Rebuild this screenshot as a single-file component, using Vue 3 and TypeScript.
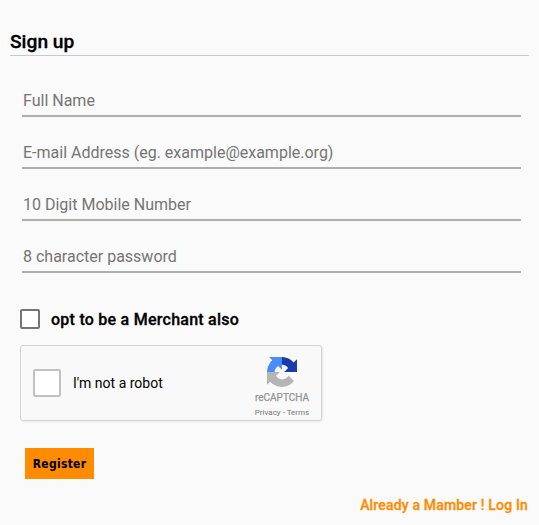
<script setup lang="ts">
import { reactive, ref } from 'vue'

interface Field {
  key: 'name' | 'email' | 'mobile' | 'password'
  type: string
  placeholder: string
}

const fields: Field[] = [
  { key: 'name', type: 'text', placeholder: 'Full Name' },
  { key: 'email', type: 'email', placeholder: 'E-mail Address (eg. example@example.org)' },
  { key: 'mobile', type: 'tel', placeholder: '10 Digit Mobile Number' },
  { key: 'password', type: 'password', placeholder: '8 character password' },
]
const form = reactive({ name: '', email: '', mobile: '', password: '' })
const merchant = ref(false)
const human = ref(false)
</script>

<template>
  <main class="signup">
    <h1 class="title">Sign up</h1>
    <form @submit.prevent>
      <div class="fields">
        <input
          v-for="f in fields"
          :key="f.key"
          v-model="form[f.key]"
          class="field"
          :type="f.type"
          :placeholder="f.placeholder"
        />
      </div>
      <label class="merchant">
        <input v-model="merchant" class="box" type="checkbox" />
        <span class="merchant-text">opt to be a Merchant also</span>
      </label>
      <div class="captcha">
        <label class="robot">
          <input v-model="human" class="box robot-box" type="checkbox" />
          <span class="robot-text">I'm not a robot</span>
        </label>
        <div class="brand">
          <svg class="logo" viewBox="0 0 64 64" aria-hidden="true">
            <path fill="#1c3aa9" d="M64 31.955l-.033-1.37V4.687l-7.16 7.16C50.948 4.674 42.033.093 32.05.093c-10.4 0-19.622 4.96-25.458 12.64l11.736 11.86a15.55 15.55 0 0 1 4.754-5.334c2.05-1.6 4.952-2.906 8.968-2.906.485 0 .86.057 1.135.163 4.976.393 9.288 3.14 11.828 7.124l-8.307 8.307L64 31.953" />
            <path fill="#4a8df6" d="M31.862.094l-1.37.033H4.594l7.16 7.16C4.58 13.147 0 22.06 0 32.046c0 10.4 4.96 19.622 12.64 25.458L24.5 45.768a15.55 15.55 0 0 1-5.334-4.754c-1.6-2.05-2.906-4.952-2.906-8.968 0-.485.057-.86.163-1.135.393-4.976 3.14-9.288 7.124-11.828l8.307 8.307L31.86.095" />
            <path fill="#b5b5b5" d="M.001 32.045l.033 1.37v25.898l7.16-7.16c5.86 7.173 14.774 11.754 24.76 11.754 10.4 0 19.622-4.96 25.458-12.64l-11.736-11.86a15.55 15.55 0 0 1-4.754 5.334c-2.05 1.6-4.952 2.906-8.968 2.906-.485 0-.86-.057-1.135-.163-4.976-.393-9.288-3.14-11.828-7.124l8.307-8.307-27.3.001" />
          </svg>
          <span class="brand-name">reCAPTCHA</span>
          <span class="legal">Privacy - Terms</span>
        </div>
      </div>
      <button class="register" type="submit">Register</button>
    </form>
    <a class="login">Already a Mamber ! Log In</a>
  </main>
</template>

<style>
body {
  background: #fafafa;
}
</style>

<style scoped>
.signup {
  box-sizing: border-box;
  display: flex;
  flex-direction: column;
  height: 525px;
  padding: 28px 10px 0;
  font-family: Roboto, 'Liberation Sans', sans-serif;
  color: #000;
}
.title {
  margin: 0;
  height: 27px;
  border-bottom: 1px solid #c8c8c8;
  font-size: 19.2px;
  line-height: 27px;
  font-weight: 500;
  -webkit-text-stroke: 0.3px #000;
}
.fields {
  display: flex;
  flex-direction: column;
  gap: 20px;
  padding: 29px 8px 0 12px;
}
.field {
  box-sizing: border-box;
  height: 32px;
  width: 100%;
  padding: 0 1px;
  border: 0;
  border-bottom: 2px solid #aeaeae;
  border-radius: 0;
  outline: 0;
  background: transparent;
  font: 16px/30px Roboto, 'Liberation Sans', sans-serif;
}
.field::placeholder {
  color: #757575;
  opacity: 1;
}
.merchant {
  display: flex;
  align-items: center;
  gap: 11px;
  width: max-content;
  height: 20px;
  margin: 36px 0 0 10px;
  font-size: 16px;
  font-weight: 500;
  letter-spacing: 0.25px;
}
.merchant-text {
  -webkit-text-stroke: 0.3px #000;
}
.box {
  appearance: none;
  box-sizing: border-box;
  width: 20px;
  height: 20px;
  margin: 0;
  border: 2px solid #757575;
  border-radius: 2px;
  background: #fff;
}
.captcha {
  box-sizing: border-box;
  display: flex;
  justify-content: space-between;
  width: 302px;
  height: 76px;
  margin: 16px 0 0 10px;
  padding: 0 11px 0 12px;
  border: 1px solid #d3d3d3;
  border-radius: 3px;
  background: #f9f9f9;
  box-shadow: 1px 1px 2px rgba(0, 0, 0, 0.08);
}
.robot {
  display: flex;
  align-items: center;
  gap: 12px;
  height: 73px;
  font-size: 14px;
}
.robot-box {
  width: 28px;
  height: 28px;
  border-color: #c1c1c1;
}
.brand {
  display: flex;
  flex-direction: column;
  align-items: center;
  width: 56px;
  padding-top: 11px;
  color: #949494;
  white-space: nowrap;
}
.logo {
  width: 30px;
  height: 30px;
}
.brand-name {
  margin-top: 5px;
  font-size: 10px;
  line-height: 12px;
  -webkit-text-stroke: 0.25px #949494;
}
.legal {
  margin-top: 4px;
  font-size: 8px;
  line-height: 10px;
  color: #777;
}
.register {
  display: block;
  width: 69px;
  height: 31px;
  margin: 27px 0 0 15px;
  padding: 2px 0 0;
  border: 0;
  border-radius: 0;
  background: #ff8c00;
  color: #000;
  font: bold 12px/29px 'DejaVu Sans Condensed', 'DejaVu Sans', sans-serif;
  font-stretch: condensed;
  letter-spacing: 0.3px;
}
.login {
  align-self: flex-end;
  margin: 16px 1px 0 0;
  color: #ff8c00;
  font-size: 14px;
  line-height: 20px;
  font-weight: 500;
  letter-spacing: 0.17px;
  -webkit-text-stroke: 0.3px #ff8c00;
}
</style>
